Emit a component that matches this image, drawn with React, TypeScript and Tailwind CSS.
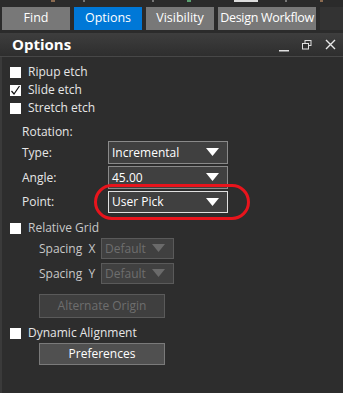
import React from "react";

const font = { fontFamily: '"Open Sans", "Noto Sans", sans-serif' };

function Check({ checked }: { checked?: boolean }) {
  return (
    <div className="w-[11px] h-[11px] bg-white flex items-center justify-center shrink-0">
      {checked && (
        <svg width="11" height="11" viewBox="0 0 11 11">
          <path d="M1.5 6 L4 9 L9.5 1" stroke="#111" strokeWidth="1.2" fill="none" />
        </svg>
      )}
    </div>
  );
}

function Arrow({ color }: { color: string }) {
  return (
    <svg width="13" height="9" viewBox="0 0 13 9">
      <path d="M0 0 H13 L6.5 8 Z" fill={color} />
    </svg>
  );
}

function Select({ value, w, h, border, disabled }: { value: string; w: string; h: string; border: string; disabled?: boolean }) {
  return (
    <div className={`${w} ${h} ${border} border bg-[#404040] flex items-center justify-between pl-[3px] pr-[8px]`}>
      <span className={disabled ? "text-[#6e6e6e]" : "text-white"}>{value}</span>
      <Arrow color={disabled ? "#6a6a6a" : "#ffffff"} />
    </div>
  );
}

export default function App() {
  return (
    <div className="w-[343px] h-[393px] bg-[#2d2d2d] text-[12px] text-[#e6e6e6] overflow-hidden flex flex-col" style={font}>
      {/* top strip */}
      <div className="h-[7px] bg-[#2b2b2b] flex items-start">
        <div className="ml-[51px] w-[4px] h-[2px] bg-[#8a6a50]" />
        <div className="ml-[28px] w-[2px] h-[2px] bg-[#777]" />
        <div className="ml-[67px] w-[2px] h-[2px] bg-[#777]" />
        <div className="ml-[33px] w-[4px] h-[2px] bg-[#5aa070]" />
        <div className="ml-[43px] w-[24px] h-[2px] bg-[#ddd]" />
        <div className="ml-[27px] w-[2px] h-[2px] bg-[#777]" />
        <div className="ml-[33px] w-[3px] h-[2px] bg-[#8a6a50]" />
      </div>
      {/* tabs */}
      <div className="h-[23px] flex gap-[4px] pl-[2px] bg-[#2b2b2b] text-[12.5px] text-white whitespace-nowrap">
        <div className="w-[68px] bg-[#787878] flex items-center justify-center">Find</div>
        <div className="w-[68px] bg-[#0078d7] flex items-center justify-center">Options</div>
        <div className="w-[68px] bg-[#787878] flex items-center justify-center">Visibility</div>
        <div className="w-[98px] bg-[#787878] flex items-center justify-center tracking-[-0.3px]">Design Workflow</div>
        <div className="flex-1 bg-[#333]" />
      </div>
      <div className="h-[3px] bg-[#2b2b2b]" />
      {/* header */}
      <div className="h-[24px] bg-gradient-to-b from-[#3e3e3e] to-[#2e2e2e] flex items-center pl-[12px] pr-[7px] border-b border-[#474747]">
        <span className="text-[15px] font-bold text-white">Options</span>
        <div className="flex-1" />
        <svg width="10" height="10" viewBox="0 0 10 10" className="mt-[6px]">
          <rect x="0" y="7" width="10" height="1.5" fill="#e0e0e0" />
        </svg>
        <svg width="10" height="10" viewBox="0 0 10 10" className="ml-[13px]">
          <rect x="3" y="0.5" width="6" height="5" stroke="#e0e0e0" strokeWidth="1" fill="none" />
          <rect x="0.5" y="3.5" width="6" height="5.5" stroke="#e0e0e0" strokeWidth="1" fill="#2f2f2f" />
        </svg>
        <svg width="11" height="11" viewBox="0 0 11 11" className="ml-[13px]">
          <path d="M1 1 L10 10 M10 1 L1 10" stroke="#e8e8e8" strokeWidth="1.4" />
        </svg>
      </div>
      {/* body */}
      <div className="flex-1 border-l-[2px] border-[#3a3a3a] pl-[8px] pt-[9px] flex flex-col">
        <div className="flex flex-col gap-[6px]">
          <div className="flex items-center gap-[7px] h-[12px]"><Check /><span>Ripup etch</span></div>
          <div className="flex items-center gap-[7px] h-[12px]"><Check checked /><span>Slide etch</span></div>
          <div className="flex items-center gap-[7px] h-[12px]"><Check /><span>Stretch etch</span></div>
        </div>
        <div className="pl-[12px] mt-[11px] h-[14px] flex items-center">Rotation:</div>
        <div className="pl-[12px] mt-[2px] flex flex-col gap-[2px]">
          <div className="flex items-center">
            <span className="w-[86px]">Type:</span>
            <Select value="Incremental" w="w-[120px]" h="h-[23px]" border="border-[#8a8a8a]" />
          </div>
          <div className="flex items-center">
            <span className="w-[86px]">Angle:</span>
            <Select value="45.00" w="w-[120px]" h="h-[23px]" border="border-[#8a8a8a]" />
          </div>
          <div className="flex items-center relative">
            <span className="w-[86px]">Point:</span>
            <Select value="User Pick" w="w-[120px]" h="h-[22px]" border="border-[#e0e0e0]" />
            <div className="absolute left-[72px] top-[-7px] w-[156px] h-[36px] border-[3px] border-[#e8141c] rounded-[18px]" />
          </div>
        </div>
        <div className="flex items-center gap-[7px] h-[12px] mt-[9px]"><Check /><span className="text-[#c8c8c8]">Relative Grid</span></div>
        <div className="pl-[29px] mt-[4px] flex flex-col gap-[4px] text-[#c8c8c8]">
          <div className="flex items-center">
            <span className="w-[62px]">Spacing&nbsp; X</span>
            <Select value="Default" w="w-[73px]" h="h-[21px]" border="border-[#5a5a5a]" disabled />
          </div>
          <div className="flex items-center">
            <span className="w-[62px]">Spacing&nbsp; Y</span>
            <Select value="Default" w="w-[73px]" h="h-[21px]" border="border-[#5a5a5a]" disabled />
          </div>
          <div className="mt-[6px] w-[126px] h-[24px] bg-[#3f3f3f] border border-[#5a5a5a] flex items-center justify-center text-[#6e6e6e]">
            Alternate Origin
          </div>
        </div>
        <div className="flex items-center gap-[7px] h-[12px] mt-[9px]"><Check /><span>Dynamic Alignment</span></div>
        <div className="pl-[29px] mt-[4px]">
          <div className="w-[126px] h-[22px] bg-[#505050] border border-[#7a7a7a] flex items-center justify-center text-white">
            Preferences
          </div>
        </div>
      </div>
    </div>
  );
}
